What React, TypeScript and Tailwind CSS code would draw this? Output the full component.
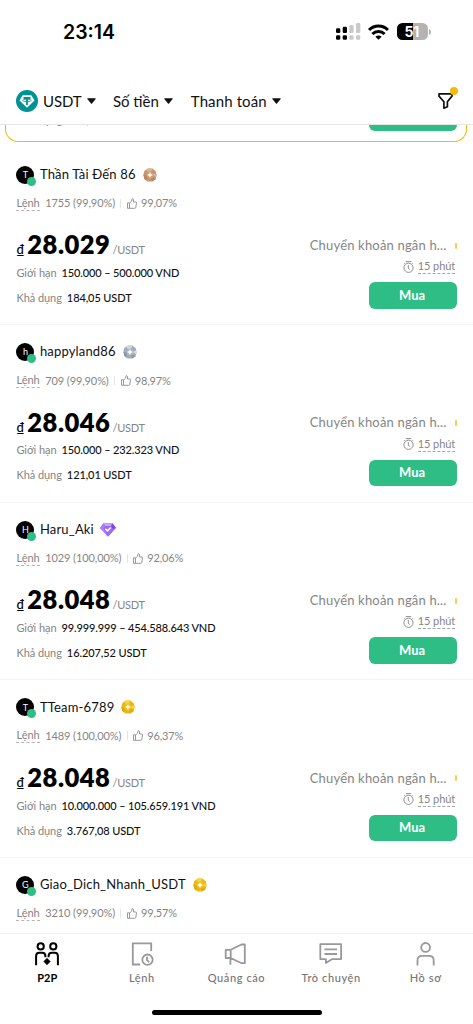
import React from "react";

type Badge = "bronze" | "silver" | "gold" | "gem";

interface Quote {
  price: string;
  limit: string;
  available: string;
}

interface Offer {
  initial: string;
  name: string;
  badge: Badge;
  orders: string;
  rating: string;
  quote?: Quote;
}

const offers: Offer[] = [
  { initial: "T", name: "Thần Tài Đến 86", badge: "bronze", orders: "1755 (99,90%)", rating: "99,07%", quote: { price: "28.029", limit: "150.000 – 500.000 VND", available: "184,05 USDT" } },
  { initial: "h", name: "happyland86", badge: "silver", orders: "709 (99,90%)", rating: "98,97%", quote: { price: "28.046", limit: "150.000 – 232.323 VND", available: "121,01 USDT" } },
  { initial: "H", name: "Haru_Aki", badge: "gem", orders: "1029 (100,00%)", rating: "92,06%", quote: { price: "28.048", limit: "99.999.999 – 454.588.643 VND", available: "16.207,52 USDT" } },
  { initial: "T", name: "TTeam-6789", badge: "gold", orders: "1489 (100,00%)", rating: "96,37%", quote: { price: "28.048", limit: "10.000.000 – 105.659.191 VND", available: "3.767,08 USDT" } },
  { initial: "G", name: "Giao_Dich_Nhanh_USDT", badge: "gold", orders: "3210 (99,90%)", rating: "99,57%" },
];

const medalColors: Record<"bronze" | "silver" | "gold", string[]> = {
  bronze: ["#c99570", "#dfb493", "#b98863", "#cd9b78"],
  silver: ["#a3acb9", "#d3d9e1", "#8f99aa", "#adb6c3"],
  gold: ["#eab913", "#f7d33c", "#dfab12", "#efbf1e"],
};

function BadgeIcon({ kind }: { kind: Badge }) {
  if (kind === "gem") {
    return (
      <svg className="ml-[6px] h-[14px] w-4" viewBox="0 0 16 14">
        <path d="M3.6.3h8.8L16 5 8 13.8 0 5z" fill="#9b67f4" />
        <path d="M3.6.3h8.8L11 3H5z" fill="#c5a5fb" />
        <path d="M0 5 3.6.3 5 3 3.2 6z" fill="#a87bf7" />
        <path d="M16 5 12.4.3 11 3l1.8 3z" fill="#7d46de" />
        <path d="m3.2 6 4.8 7.8L0 5z" fill="#b68efa" />
        <path d="m5.3 5.8 2.1 2.1 3.5-3.4" fill="none" stroke="#fff" strokeWidth="1.5" />
      </svg>
    );
  }
  const c = medalColors[kind];
  return (
    <svg className="ml-[7px] size-[14px]" viewBox="0 0 14 14">
      <path d="M4.8.6 7 .4l2.4.2 1.8 1.3 1.6 1.4.4 2.1.4 1.6-.4 2-.6 2.2-1.8 1.2L9 13.4l-2 .2-2.4-.2-1.9-1.1-1.5-1.6-.4-2.1L.4 7l.4-2.2.7-2L3.2 1.7z" fill={c[0]} />
      <path d="M9.4.6 7 7 3.2 1.7 4.8.6 7 .4z" fill={c[1]} />
      <path d="m13.2 5.4.4 1.6-.4 2L7 7z" fill={c[1]} />
      <path d="m12.6 11.2-1.8 1.2-1.8 1L7 7z" fill={c[2]} />
      <path d="m1.2 10.7-.4-2.1L.4 7H7l-4.3 5.3z" fill={c[2]} />
      <circle cx="7" cy="7" r="3.6" fill={c[3]} />
      <path d="m7 4 .9 2.1L10 7l-2.1.9L7 10l-.9-2.1L4 7l2.1-.9z" fill="#fff" />
    </svg>
  );
}

function ThumbIcon() {
  return (
    <svg className="mr-[4px] h-[11px] w-[10px]" viewBox="0 0 10 11" fill="none" stroke="#8c8c8c" strokeWidth="0.9" strokeLinejoin="round">
      <path d="M.5 4.8h2v5.5h-2zM2.5 5.1 4.7 3 5 .8c.1-.5 1.5-.3 1.5.9V4h2.4c.5 0 .7.3.6.8l-.7 4.6c-.1.6-.4.9-1 .9H2.5" />
    </svg>
  );
}

function TimerIcon() {
  return (
    <svg className="mr-[4px] h-[12px] w-[11px]" viewBox="0 0 11 12" fill="none" stroke="#858585" strokeWidth="0.9">
      <circle cx="5.5" cy="6.8" r="4.6" />
      <path d="M2.8.6h5.4M5.3 4v3l1.4 1.7M9 2.2l.9.9M2 2.2l-.9.9" />
    </svg>
  );
}

function Caret() {
  return (
    <svg className="h-[6px] w-[9px]" viewBox="0 0 9 6">
      <path d="M.9.2h7.2c.6 0 .8.5.5.9L5 5.5c-.3.3-.7.3-1 0L.4 1.1C.1.7.3.2.9.2z" fill="#111" />
    </svg>
  );
}

function QuoteBlock({ quote }: { quote: Quote }) {
  return (
    <div className="flex justify-between">
      <div>
        <div className="mt-[19px] flex h-7 items-baseline leading-7 text-black">
          <span className="mr-[3px] text-[13px] font-medium">₫</span>
          <span className="text-[25.5px] font-extrabold tracking-[0.5px]">{quote.price}</span>
          <span className="ml-[2px] text-[11px] tracking-[-0.2px] text-[#858585]">/USDT</span>
        </div>
        <div className="mt-[7px] flex h-4 items-center text-[11px]">
          <span className="mr-[5px] tracking-[-0.05px] text-[#858585]">Giới hạn</span>
          <span className="font-medium tracking-[-0.13px] text-[#111]">{quote.limit}</span>
        </div>
        <div className="mt-[9px] flex h-4 items-center text-[11px]">
          <span className="mr-[5px] tracking-[-0.05px] text-[#858585]">Khả dụng</span>
          <span className="font-medium tracking-[-0.1px] text-[#111]">{quote.available}</span>
        </div>
      </div>
      <div className="flex flex-col items-end pt-[26.5px]">
        <div className="flex h-4 items-center text-[13px] text-[#858585]">
          <span className="tracking-[0.18px]">Chuyển khoản ngân h...</span>
          <span className="ml-2 h-[6px] w-[2px] rounded-full bg-[#f8cc45]" />
        </div>
        <div className="mt-[5px] mr-[1.5px] flex h-4 items-center text-[11px] leading-[14px] text-[#858585]">
          <TimerIcon />
          <span className="border-b border-dashed border-[#a5a5a5] tracking-[-0.1px]">15 phút</span>
        </div>
        <button className="mt-[7.5px] h-[26.5px] w-[88px] rounded-[6px] bg-[#2ebd85] pr-[1px] text-[13px] font-bold text-white">Mua</button>
      </div>
    </div>
  );
}

function OfferCard({ offer }: { offer: Offer }) {
  return (
    <article className="h-[177.6px] shrink-0 border-b border-[#f4f4f4] px-[16.4px] pt-[17.5px]">
      <div className="flex h-[19px] items-center">
        <div className="relative mr-[5.5px] flex size-[18px] shrink-0 items-center justify-center rounded-full bg-black text-[9px] text-white">
          {offer.initial}
          <span className="absolute -right-[2px] -bottom-[2px] size-[9px] rounded-full bg-[#2ebd85]" />
        </div>
        <span className="text-[13px] tracking-[0.17px] text-[#111]">{offer.name}</span>
        <BadgeIcon kind={offer.badge} />
      </div>
      <div className="mt-[11px] flex h-4 items-center text-[11px] leading-[14px] text-[#858585]">
        <span className="mr-[5.5px] border-b border-dashed border-[#b5b5b5]">Lệnh</span>
        <span className="tracking-[-0.1px]">{offer.orders}</span>
        <span className="mr-[5.5px] ml-[5.5px] h-[9px] w-px bg-[#e4e4e4]" />
        <ThumbIcon />
        <span className="tracking-[-0.15px]">{offer.rating}</span>
      </div>
      {offer.quote && <QuoteBlock quote={offer.quote} />}
    </article>
  );
}

function StatusBar() {
  return (
    <div className="flex h-[63px] items-center justify-between pr-[42px] pl-[63px]">
      <span className="pt-[2px] font-['Inter',sans-serif] text-[19.5px] font-semibold text-black">23:14</span>
      <div className="flex items-center">
        <svg className="h-[17px] w-[25px]" viewBox="0 0 25 17">
          <g fill="#000">
            <rect x="0" y="5.2" width="4.3" height="4.9" rx="1.3" />
            <rect x="6.7" y="3.7" width="4.3" height="6.4" rx="1.3" />
            <rect x="0" y="12.2" width="4.3" height="4.5" rx="1.3" />
            <rect x="6.7" y="12.2" width="4.3" height="4.5" rx="1.3" />
          </g>
          <g fill="#c9c9c9">
            <rect x="13.3" y="2" width="4.3" height="8.1" rx="1.3" />
            <rect x="20" y="0" width="4.3" height="10.1" rx="1.3" />
            <rect x="13.3" y="12.2" width="4.3" height="4.5" rx="1.3" />
            <rect x="20" y="12.2" width="4.3" height="4.5" rx="1.3" />
          </g>
        </svg>
        <svg className="ml-[7.5px] h-[16px] w-[21px]" viewBox="0 0 21 16" fill="none" stroke="#000" strokeWidth="3">
          <path d="M1 6a13.4 13.4 0 0 1 19 0" />
          <path d="M4.4 10a8.6 8.6 0 0 1 12.2 0" />
          <path d="M10.5 15.8 7.4 12.7a4.4 4.4 0 0 1 6.2 0z" fill="#000" stroke="none" />
        </svg>
        <div className="ml-[7.5px] flex h-[17px] w-[31.5px] items-center justify-center rounded-[5.5px] bg-linear-to-r from-black from-51% to-[#b3b3b3] to-51% pr-[1px] font-['Inter',sans-serif] text-[14px] font-bold tracking-[-0.3px] text-white">
          51
        </div>
        <svg className="ml-[1px] h-[6px] w-[2px]" viewBox="0 0 2 6">
          <path d="M0 0c2.7 1.2 2.7 4.8 0 6z" fill="#b3b3b3" />
        </svg>
      </div>
    </div>
  );
}

function FilterBar() {
  return (
    <div className="flex h-[61.5px] items-center border-b border-[#e6e6e6] pt-[15px] pr-[18.5px] pl-[16.4px] text-[15px] text-[#111]">
      <svg className="mr-[4.6px] size-[22px]" viewBox="0 0 22 22">
        <circle cx="11" cy="11" r="11" fill="#009393" />
        <path d="M6.7 5.2h8.6l3.2 5.3-7.5 7.3-7.5-7.3z" fill="#fff" />
        <path d="M7.5 7.1h7v1.8h-2.6V15h-1.8V8.9H7.5z" fill="#009393" />
        <ellipse cx="11" cy="10.4" rx="4.3" ry="1.2" fill="none" stroke="#009393" strokeWidth="0.8" />
      </svg>
      <span className="mr-[5px] tracking-[-0.1px]">USDT</span>
      <Caret />
      <span className="mr-[5.5px] ml-[17.4px]">Số tiền</span>
      <Caret />
      <span className="mr-[5px] ml-[17.4px] tracking-[0.12px]">Thanh toán</span>
      <Caret />
      <div className="relative ml-auto flex size-[18px] items-center justify-center">
        <svg className="h-[16px] w-[15px]" viewBox="0 0 15 16" fill="none" stroke="#111" strokeWidth="1.7" strokeLinejoin="round">
          <path d="M1 .9h13v2.2L9.4 8.8v5L5.9 15.2V8.8L1 3.1z" />
        </svg>
        <span className="absolute -top-[4.5px] -right-[3.5px] size-2 rounded-full bg-[#f3b90c]" />
      </div>
    </div>
  );
}

const tabs = [
  {
    label: "P2P",
    active: true,
    icon: (
      <svg className="h-6 w-6" viewBox="0 0 24 24" fill="none" stroke="#000" strokeWidth="2">
        <circle cx="5.7" cy="4.4" r="3.1" />
        <circle cx="18.3" cy="4.4" r="3.1" />
        <path d="M1.1 23.3V14c0-2 1.2-3.3 3.2-3.3h2.8c2 0 3.3 1.3 3.3 3.3v1.3M22.9 23.3V14c0-2-1.2-3.3-3.2-3.3h-2.8c-2 0-3.3 1.3-3.3 3.3v1.3" />
        <path d="M12 16.2 15.2 19.5 12 22.8 8.8 19.5z" fill="#000" stroke="#000" strokeWidth="0.6" strokeLinejoin="round" />
      </svg>
    ),
  },
  {
    label: "Lệnh",
    icon: (
      <svg className="h-6 w-6" viewBox="0 0 24 24" fill="none" stroke="#999" strokeWidth="1.8">
        <path d="M21.2 9V1.3H2.8v21.2h7.4" />
        <circle cx="17.5" cy="17.7" r="5.2" />
        <path d="M17 14.7v3.5l2.1 1.9" />
      </svg>
    ),
  },
  {
    label: "Quảng cáo",
    icon: (
      <svg className="h-6 w-6" viewBox="0 0 24 24" fill="none" stroke="#999" strokeWidth="1.8" strokeLinejoin="round">
        <path d="M1.7 7.8h5v8.2h-5zM6.7 7.8l10.8-5.3h3.3v18.7h-3.3L6.7 16M6.4 16v6.8" />
      </svg>
    ),
  },
  {
    label: "Trò chuyện",
    icon: (
      <svg className="h-6 w-6" viewBox="0 0 24 24" fill="none" stroke="#999" strokeWidth="1.8" strokeLinejoin="round">
        <path d="M1.3 2.1h20.8v15h-8.8l-6.4 4v-4H1.3zM5.5 7.3h12.6M5.5 12h12.6" />
      </svg>
    ),
  },
  {
    label: "Hồ sơ",
    icon: (
      <svg className="h-6 w-6" viewBox="0 0 24 24" fill="none" stroke="#999" strokeWidth="1.8">
        <circle cx="11.6" cy="5.4" r="4.4" />
        <path d="M3.5 23.4v-5.2c0-2.7 1.8-4.4 4.5-4.4h7.2c2.7 0 4.5 1.7 4.5 4.4v5.2" />
      </svg>
    ),
  },
];

export default function App() {
  return (
    <div className="flex h-[1024px] w-full flex-col overflow-hidden bg-white font-['Lato','Liberation_Sans',sans-serif]">
      <StatusBar />
      <FilterBar />
      <main className="flex min-h-0 flex-1 flex-col overflow-hidden">
        <div className="flex h-[23px] shrink-0 flex-col justify-end overflow-hidden pr-[6px] pb-[5.5px] pl-[5px]">
          <div className="flex h-[60px] shrink-0 items-end justify-between rounded-b-[13px] border border-t-0 border-[#f0b90b] pr-[9.5px] pb-[10px] pl-[10.5px] text-[11px]">
            <div className="mb-[3px] flex h-4 items-center">
              <span className="mr-[5px] text-[#858585]">Khả dụng</span>
              <span className="text-[#111]">203,15 USDT</span>
            </div>
            <div className="h-[26.5px] w-[88px] rounded-[6px] bg-[#2ebd85]" />
          </div>
        </div>
        {offers.map((offer) => (
          <OfferCard key={offer.name} offer={offer} />
        ))}
      </main>
      <footer className="flex h-[91px] shrink-0 flex-col border-t border-[#eeeeee] bg-white">
        <nav className="grid grid-cols-5 pt-[8px]">
          {tabs.map((tab) => (
            <div key={tab.label} className="flex flex-col items-center">
              {tab.icon}
              <span className={tab.active ? "mt-[4px] text-[11px] leading-4 font-bold text-black" : "mt-[4px] text-[11px] leading-4 font-medium tracking-[0.6px] text-[#757575]"}>{tab.label}</span>
            </div>
          ))}
        </nav>
        <div className="mt-auto mb-[9px] h-[5.5px] w-[170px] self-center rounded-full bg-black" />
      </footer>
    </div>
  );
}
